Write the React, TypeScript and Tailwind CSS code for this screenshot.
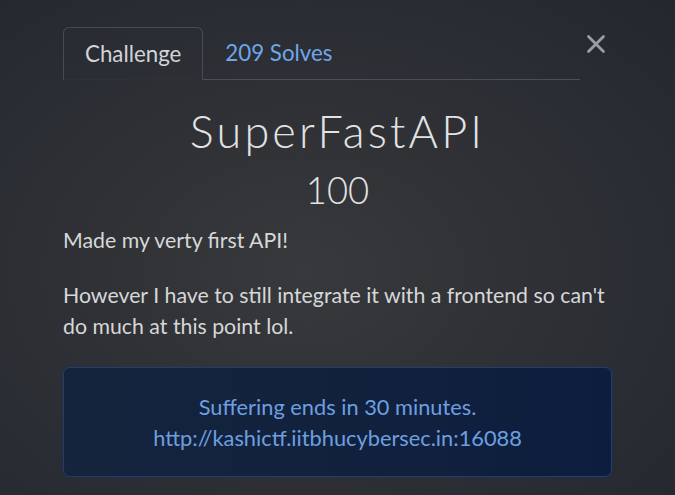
import { X } from "lucide-react";

export default function App() {
  return (
    <div
      className="w-[675px] h-[495px] overflow-hidden bg-[#2c2f35] bg-[radial-gradient(ellipse_at_45%_55%,#38393c_0%,#313236_35%,#2a2d33_65%,#24272d_100%)] px-[63px] pt-[27px]"
      style={{ fontFamily: "Lato, 'Noto Sans', sans-serif" }}
    >
      {/* header: tabs + close */}
      <div className="flex items-start">
        <ul className="flex flex-1 border-b border-[#4a4f57]">
          <li className="-mb-px rounded-t-[6px] border border-[#474c54] border-b-[#2e3137] px-[21px] py-[10px] text-[22.3px] leading-[31px] text-[#d2d4d7]">
            Challenge
          </li>
          <li className="px-[22px] py-[10px] text-[22.3px] leading-[31px] text-[#6fa6ea]">
            209 Solves
          </li>
        </ul>
        <button className="flex w-[32px] h-[32px] items-center justify-center mt-[1px] text-[#9b9ea2]">
          <X size={30} strokeWidth={2.2} />
        </button>
      </div>

      {/* body */}
      <div className="pt-[25px]">
        <h3 className="text-center text-[45px] leading-[52px] font-light tracking-[0.07em] text-[#e2e3e4]">
          SuperFastAPI
        </h3>
        <h4 className="mt-[11px] text-center text-[36.4px] leading-[44px] font-light text-[#e2e3e4]">
          100
        </h4>
        <div className="mt-[13px] text-[21.3px] leading-[31.5px] text-[#d6d7d9]">
          <p className="mb-[23px]">Made my verty first API!</p>
          <p>
            However I have to still integrate it with a frontend so can't do
            much at this point lol.
          </p>
        </div>
        <div className="mt-[24px] rounded-[7px] border border-[#1d3f74] bg-[#11223f] bg-[linear-gradient(90deg,#15243d_0%,#11213d_60%,#0c1d3e_100%)] px-[21px] py-[23px] text-center text-[21.8px] leading-[31px] text-[#6d9fe0]">
          <div>Suffering ends in 30 minutes.</div>
          <div>http://kashictf.iitbhucybersec.in:16088</div>
        </div>
      </div>
    </div>
  );
}
